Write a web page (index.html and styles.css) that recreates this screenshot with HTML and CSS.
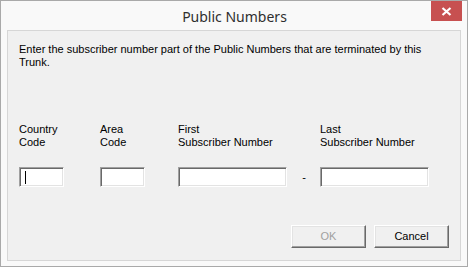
FILE: index.html
```html
<!DOCTYPE html>
<html>
<head>
<meta charset="utf-8">
<link rel="stylesheet" href="styles.css">
</head>
<body>
<div class="window">
  <div class="titlebar">
    <div class="title">Public Numbers</div>
    <div class="close">
      <svg width="11" height="9" viewBox="0 0 11 9"><path d="M1.5 1 L9.5 8 M9.5 1 L1.5 8" stroke="#fff" stroke-width="2.2" fill="none"/></svg>
    </div>
  </div>
  <div class="client">
    <p class="intro">Enter the subscriber number part of the Public Numbers that are terminated by this Trunk.</p>
    <div class="fields">
      <div class="field f-country">
        <div class="label">Country<br>Code</div>
        <div class="input"><span class="caret"></span></div>
      </div>
      <div class="field f-area">
        <div class="label">Area<br>Code</div>
        <div class="input"></div>
      </div>
      <div class="field f-first">
        <div class="label">First<br>Subscriber Number</div>
        <div class="input"></div>
      </div>
      <div class="dash">-</div>
      <div class="field f-last">
        <div class="label">Last<br>Subscriber Number</div>
        <div class="input"></div>
      </div>
    </div>
    <div class="buttons">
      <div class="btn disabled">OK</div>
      <div class="btn">Cancel</div>
    </div>
  </div>
</div>
</body>
</html>
```
FILE: styles.css
```css
html, body {
  margin: 0;
  padding: 0;
}
body {
  width: 468px;
  height: 267px;
  overflow: hidden;
}
.window {
  box-sizing: border-box;
  width: 468px;
  height: 267px;
  border: 1px solid #a9a9a9;
  background: #f9f9f9;
  display: flex;
  flex-direction: column;
}
.titlebar {
  height: 29px;
  position: relative;
  display: flex;
  justify-content: center;
}
.title {
  font-family: "Noto Sans", sans-serif;
  font-size: 14px;
  color: #2e2e2e;
  line-height: 29px;
  padding-top: 1px;
  padding-left: 1px;
}
.close {
  position: absolute;
  top: 0;
  right: 5px;
  width: 31px;
  height: 20px;
  background: #c75050;
  display: flex;
  align-items: center;
  justify-content: center;
}
.client {
  box-sizing: border-box;
  margin: 0 6px 5px 6px;
  flex: 1;
  border: 1px solid #d6d6d6;
  background: #f0f0f0;
  padding: 12px 0 0 11px;
  font-family: "Liberation Sans", Arial, sans-serif;
  font-size: 11px;
  line-height: 13px;
  color: #000;
  display: flex;
  flex-direction: column;
}
.intro {
  margin: 0;
  width: 420px;
}
.fields {
  display: flex;
  align-items: flex-end;
  margin-top: 54px;
}
.field {
  display: flex;
  flex-direction: column;
}
.label {
  height: 26px;
  margin-bottom: 18px;
}
.input {
  box-sizing: border-box;
  height: 20px;
  background: #fff;
  border-top: 1px solid #a0a0a0;
  border-left: 1px solid #a0a0a0;
  border-right: 1px solid #ffffff;
  border-bottom: 1px solid #ffffff;
  box-shadow: inset 1px 1px 0 #696969, inset -1px -1px 0 #e3e3e3;
  position: relative;
}
.caret {
  position: absolute;
  left: 5px;
  top: 3px;
  width: 1px;
  height: 13px;
  background: #000;
}
.f-country { width: 81px; }
.f-country .input { width: 45px; }
.f-area { width: 78px; }
.f-area .input { width: 45px; }
.f-first { width: 109px; }
.f-first .input { width: 109px; }
.dash {
  width: 33px;
  text-align: center;
  line-height: 20px;
  padding-left: 1px;
  box-sizing: border-box;
}
.f-last .input { width: 109px; }
.buttons {
  display: flex;
  justify-content: flex-end;
  gap: 8px;
  margin-top: 38px;
  padding-right: 11px;
}
.btn {
  box-sizing: border-box;
  width: 75px;
  height: 23px;
  background: #f0f0f0;
  border-top: 1px solid #ffffff;
  border-left: 1px solid #ffffff;
  border-right: 1px solid #696969;
  border-bottom: 1px solid #696969;
  box-shadow: inset -1px -1px 0 #a0a0a0, inset 1px 1px 0 #e3e3e3;
  text-align: center;
  line-height: 20px;
}
.btn.disabled {
  color: #a0a0a0;
}
```
